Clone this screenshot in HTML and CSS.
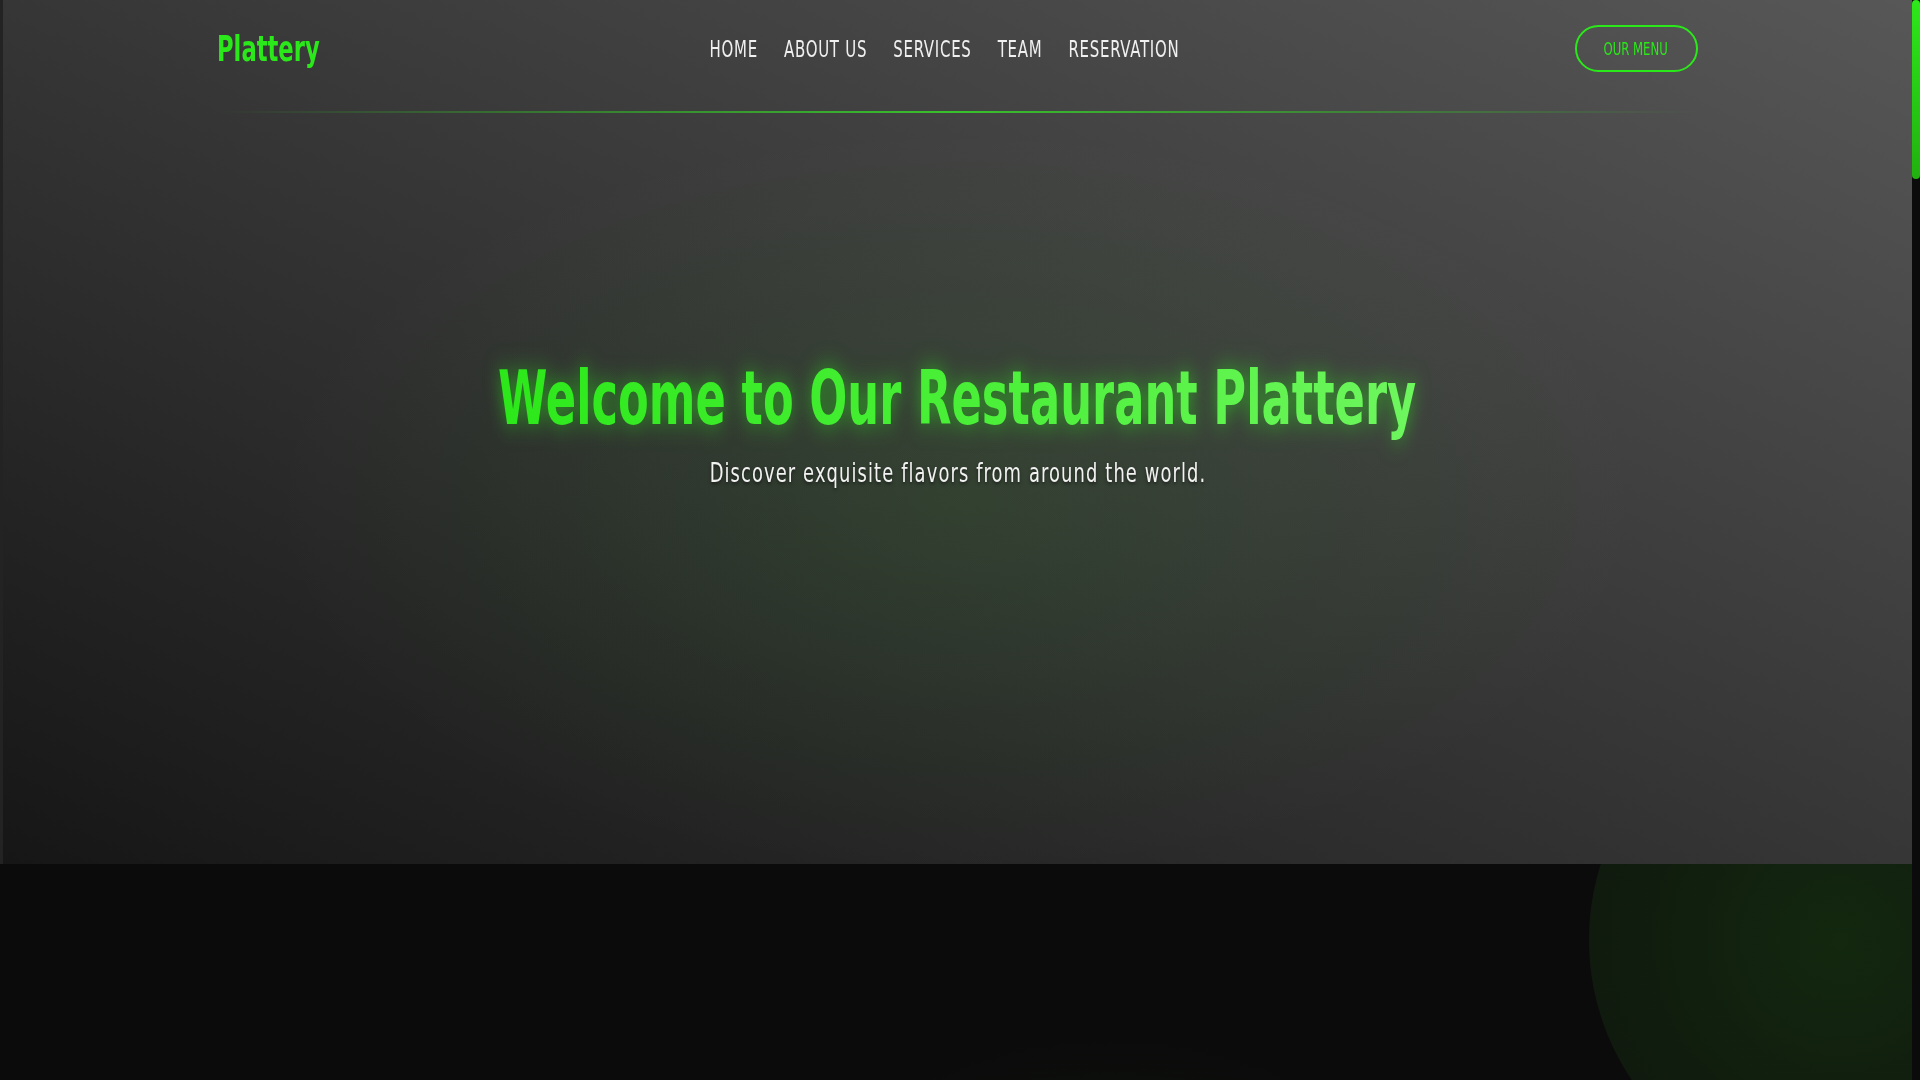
FILE: index.html
```html
<!DOCTYPE html>
<html lang="en">
<head>
<meta charset="utf-8">
<title>Plattery</title>
<link rel="stylesheet" href="styles.css">
</head>
<body>
<div class="page">
  <section class="hero">
    <div class="container">
      <header class="topbar">
        <a class="logo" href="#"><span>Plattery</span></a>
        <nav class="nav">
          <a href="#">HOME</a>
          <a href="#">ABOUT US</a>
          <a href="#">SERVICES</a>
          <a href="#">TEAM</a>
          <a href="#">RESERVATION</a>
        </nav>
        <a class="menu-btn" href="#"><span>OUR MENU</span></a>
      </header>
      <div class="topline"></div>
    </div>
    <div class="hero-content">
      <h1 class="hero-title"><span>Welcome to Our Restaurant Plattery</span></h1>
      <p class="hero-sub"><span>Discover exquisite flavors from around the world.</span></p>
    </div>
  </section>
  <section class="next">
    <div class="orb orb-right"></div>
    <div class="orb orb-bottom"></div>
  </section>
</div>
<div class="scrollbar"><div class="scrollbar-thumb"></div></div>
</body>
</html>
```
FILE: styles.css
```css
html, body {
  margin: 0;
  background: #0b0b0b;
  overflow: hidden;
}
body {
  font-family: "DejaVu Sans Condensed", "DejaVu Sans", sans-serif;
  color: #eee;
}
a { text-decoration: none; }

.page {
  width: calc(100vw - 8px);
}

/* fake custom scrollbar */
.scrollbar {
  position: fixed;
  top: 0;
  right: 0;
  width: 8px;
  height: 100vh;
  background: #0b0b0b;
}
.scrollbar-thumb {
  height: 179px;
  border-radius: 5px;
  background: linear-gradient(180deg, #2de81a, #21b10f);
}

.hero {
  position: relative;
  height: 80vh;
  overflow: hidden;
  box-sizing: border-box;
  border-left: 3px solid #232323;
  background:
    radial-gradient(ellipse 50% 60% at 50% 58%, rgba(40, 210, 20, 0.085), transparent 72%),
    linear-gradient(to top right, #161616 0%, #363636 50%, #575757 100%);
}
.container {
  width: 1480px;
  margin: 0 auto;
}
.topbar {
  display: grid;
  grid-template-columns: 1fr auto 1fr;
  align-items: center;
  padding-top: 25px;
  height: 47px;
}
.logo {
  justify-self: start;
  color: #2be81a;
  font-weight: 700;
  font-size: 36px;
  line-height: 1;
}
.logo span {
  display: inline-block;
  transform: scaleX(0.7);
  transform-origin: left center;
  margin-left: -1px;
}
.nav {
  display: flex;
  gap: 36px;
  margin: 2px 26px 0 0;
  transform: scaleX(0.724);
  transform-origin: center;
}
.nav a {
  color: #f0f0f0;
  font-size: 23px;
  letter-spacing: 1px;
  line-height: 1;
}
.menu-btn {
  justify-self: end;
  display: flex;
  align-items: center;
  justify-content: center;
  box-sizing: border-box;
  width: 123px;
  height: 47px;
  border: 2px solid #2be81a;
  border-radius: 30px;
  color: #2be81a;
  font-size: 18px;
}
.menu-btn span {
  display: inline-block;
  transform: scaleX(0.72);
}
.topline {
  margin-top: 39px;
  height: 2px;
  background: linear-gradient(90deg, rgba(43, 232, 26, 0) 0%, rgba(50, 210, 35, 0.45) 25%, rgba(55, 215, 40, 0.85) 50%, rgba(50, 210, 35, 0.45) 75%, rgba(43, 232, 26, 0) 100%);
}
.hero-content {
  text-align: center;
  margin-top: 241px;
}
.hero-title {
  margin: 0;
  font-size: 74px;
  line-height: 1.2;
  font-weight: 700;
}
.hero-title span {
  display: inline-block;
  transform: scaleX(0.673);
  background: linear-gradient(90deg, #2ce81a 0%, #4cf03a 55%, #6ef65e 100%);
  -webkit-background-clip: text;
  background-clip: text;
  color: transparent;
  filter: drop-shadow(0 0 12px rgba(43, 232, 26, 0.6));
}
.hero-sub {
  margin: 14px 0 0;
  font-size: 27px;
  letter-spacing: 1.5px;
  color: #f2f2f2;
  text-shadow: 0 2px 4px rgba(0, 0, 0, 0.5);
}
.hero-sub span {
  display: inline-block;
  transform: scaleX(0.737);
}

.next {
  position: relative;
  height: 600px;
  background: #0b0b0b;
  overflow: hidden;
}
.orb {
  position: absolute;
  border-radius: 50%;
}
.orb-right {
  left: 1589px;
  top: -174px;
  width: 500px;
  height: 500px;
  background: radial-gradient(circle at 50% 50%, #13280f 0%, #101c0e 60%, #0f180e 100%);
}
.orb-bottom {
  left: 760px;
  top: 150px;
  width: 700px;
  height: 500px;
  background: radial-gradient(ellipse at 50% 50%, rgba(30, 70, 20, 0.25), rgba(20, 40, 15, 0) 65%);
}
```
